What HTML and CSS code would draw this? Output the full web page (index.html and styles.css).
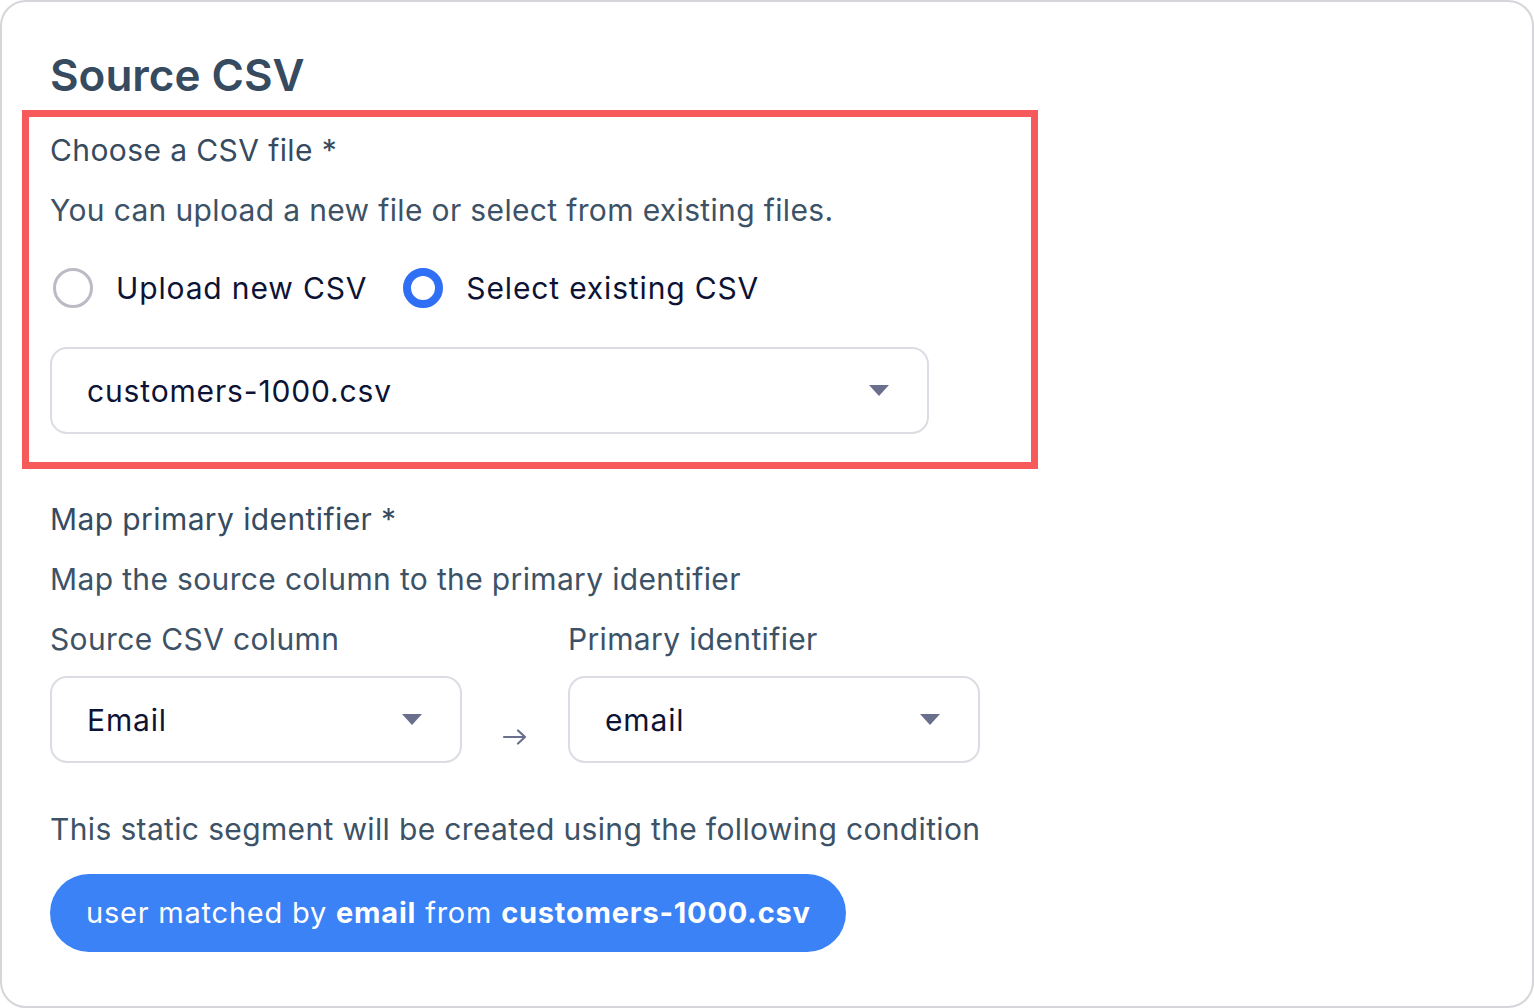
FILE: index.html
```html
<!DOCTYPE html>
<html>
<head>
<meta charset="utf-8">
<link rel="stylesheet" href="styles.css">
</head>
<body>
<div class="card">
  <h1 class="title">Source CSV</h1>
  <div class="highlight">
    <div class="label">Choose a CSV file *</div>
    <div class="help">You can upload a new file or select from existing files.</div>
    <div class="radios">
      <label class="radio"><span class="dot"></span><span class="rtext">Upload new CSV</span></label>
      <label class="radio checked"><span class="dot"></span><span class="rtext">Select existing CSV</span></label>
    </div>
    <div class="select wide"><span class="value">customers-1000.csv</span><span class="caret"></span></div>
  </div>
  <div class="section">
    <div class="label">Map primary identifier *</div>
    <div class="help">Map the source column to the primary identifier</div>
    <div class="mapping">
      <div class="col">
        <div class="sublabel">Source CSV column</div>
        <div class="select half"><span class="value">Email</span><span class="caret"></span></div>
      </div>
      <div class="arrow">
        <svg width="26" height="18" viewBox="0 0 26 18"><path d="M2 9H23M16 2.5L23 9L16 15.5" fill="none" stroke="#6b6f8e" stroke-width="2.2" stroke-linecap="round" stroke-linejoin="round"/></svg>
      </div>
      <div class="col">
        <div class="sublabel">Primary identifier</div>
        <div class="select half"><span class="value">email</span><span class="caret"></span></div>
      </div>
    </div>
    <div class="help cond">This static segment will be created using the following condition</div>
    <div class="pill">user matched by <b>email</b> from <b>customers-1000.csv</b></div>
  </div>
</div>
</body>
</html>
```
FILE: styles.css
```css
html, body {
  margin: 0;
  padding: 0;
  background: #ffffff;
}
body {
  font-family: Inter, "Noto Sans", sans-serif;
}
.card {
  box-sizing: border-box;
  width: 1534px;
  height: 1008px;
  border: 2px solid #d5d5da;
  border-radius: 26px;
  padding: 0 0 0 48px;
  background: #fff;
}
.title {
  margin: 0;
  padding-top: 46px;
  font-size: 44px;
  line-height: 54px;
  font-weight: 600;
  color: #364b60;
  letter-spacing: 0;
}
.highlight {
  width: 1016px;
  box-sizing: border-box;
  margin: 8px 0 0 -28px;
  border: 7px solid #f65a5a;
  padding: 13px 21px 28px;
}
.label {
  font-size: 30px;
  line-height: 40px;
  color: #364b60;
  letter-spacing: 0.4px;
}
.help {
  margin-top: 20px;
  font-size: 30px;
  line-height: 40px;
  color: #3d5266;
  letter-spacing: 0.35px;
}
.radios {
  display: flex;
  align-items: center;
  gap: 33px;
  margin-top: 28px;
  height: 60px;
}
.radio {
  display: flex;
  align-items: center;
  gap: 23px;
}
.dot {
  box-sizing: border-box;
  width: 40px;
  height: 40px;
  border-radius: 50%;
  border: 3px solid #bbbbc6;
  margin-left: 3px;
}
.radio.checked .dot {
  border: 8px solid #2f6ff5;
}
.rtext {
  font-size: 30px;
  color: #0d1335;
  letter-spacing: 0.85px;
}
.select {
  box-sizing: border-box;
  height: 87px;
  border: 2px solid #dcdce4;
  border-radius: 17px;
  display: flex;
  align-items: center;
  justify-content: space-between;
  padding: 0 38px 0 35px;
  font-size: 30px;
  color: #0d1335;
  letter-spacing: 0.85px;
}
.select.wide {
  width: 879px;
  margin-top: 29px;
}
.select.half {
  width: 412px;
}
.caret {
  width: 0;
  height: 0;
  border-left: 10px solid transparent;
  border-right: 10px solid transparent;
  border-top: 11px solid #6b6f8e;
}
.section {
  padding-top: 30px;
}
.mapping {
  display: flex;
  align-items: flex-start;
  margin-top: 20px;
}
.sublabel {
  font-size: 30px;
  line-height: 40px;
  color: #3d5266;
  letter-spacing: 0.35px;
  margin-bottom: 17px;
}
.arrow {
  width: 106px;
  display: flex;
  justify-content: center;
  padding-top: 109px;
}
.cond {
  margin-top: 46px;
}
.pill {
  display: inline-block;
  margin-top: 25px;
  height: 78px;
  line-height: 78px;
  box-sizing: border-box;
  padding: 0 35px 0 36px;
  background: #3b82f6;
  color: #fff;
  border-radius: 40px;
  font-size: 29px;
  letter-spacing: 0.78px;
}
.pill b {
  font-weight: 700;
}
```
